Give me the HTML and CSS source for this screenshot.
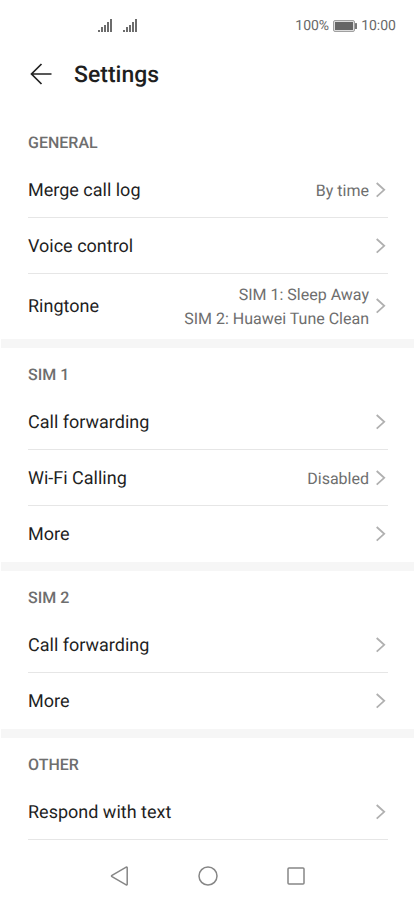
FILE: index.html
```html
<!DOCTYPE html>
<html lang="en">
<head>
    <meta charset="UTF-8">
    <meta name="viewport" content="width=device-width, initial-scale=1.0">
    <title>Settings</title>
    <link rel="stylesheet" href="styles.css">
</head>
<body>
    <!-- Shared icons -->
    <svg class="sprite" aria-hidden="true">
        <symbol id="chevron" viewBox="0 0 12 16">
            <path d="M0.700 1 L8.200 7.800 L0.700 14.600" fill="none" stroke="#b0b0b0" stroke-width="1.800"/>
        </symbol>
        <symbol id="signal" viewBox="0 0 15 14">
            <path d="M0 11h2v2H0zM3 8h2v5H3zM6 6h2v7H6zM9 3h2v10H9zM12 0h2v13h-2z" fill="#6c6c6c"/>
        </symbol>
    </svg>

    <div class="status-bar">
        <div class="signals">
            <svg class="signal"><use href="#signal"/></svg>
            <svg class="signal"><use href="#signal"/></svg>
        </div>
        <div class="status-right">
            <span>100%</span>
            <svg class="battery" viewBox="0 0 24 12">
                <rect x="0.500" y="0.500" width="21" height="11" rx="1.500" fill="#ddd" stroke="#a0a0a0"/>
                <rect x="2" y="2" width="18" height="8" fill="#666"/>
                <rect x="22" y="3" width="2" height="6" rx="0.500" fill="#777"/>
            </svg>
            <span>10:00</span>
        </div>
    </div>

    <header class="header">
        <button class="back" type="button" aria-label="Back">
            <svg viewBox="0 0 22 22">
                <path d="M21.500 11H1.500M11.500 1L1.500 11L11.500 21" fill="none" stroke="#222" stroke-width="1.700"/>
            </svg>
        </button>
        <h1>Settings</h1>
    </header>

    <main>
        <section class="group">
            <h2>GENERAL</h2>
            <a class="row" href="#">
                <span class="label">Merge call log</span>
                <span class="value">By time</span>
                <svg class="chevron"><use href="#chevron"/></svg>
            </a>
            <a class="row" href="#">
                <span class="label">Voice control</span>
                <svg class="chevron"><use href="#chevron"/></svg>
            </a>
            <a class="row" href="#">
                <span class="label">Ringtone</span>
                <span class="value">SIM 1: Sleep Away<br>SIM 2: Huawei Tune Clean</span>
                <svg class="chevron"><use href="#chevron"/></svg>
            </a>
        </section>

        <section class="group">
            <h2>SIM 1</h2>
            <a class="row" href="#">
                <span class="label">Call forwarding</span>
                <svg class="chevron"><use href="#chevron"/></svg>
            </a>
            <a class="row" href="#">
                <span class="label">Wi-Fi Calling</span>
                <span class="value">Disabled</span>
                <svg class="chevron"><use href="#chevron"/></svg>
            </a>
            <a class="row" href="#">
                <span class="label">More</span>
                <svg class="chevron"><use href="#chevron"/></svg>
            </a>
        </section>

        <section class="group">
            <h2>SIM 2</h2>
            <a class="row" href="#">
                <span class="label">Call forwarding</span>
                <svg class="chevron"><use href="#chevron"/></svg>
            </a>
            <a class="row" href="#">
                <span class="label">More</span>
                <svg class="chevron"><use href="#chevron"/></svg>
            </a>
        </section>

        <section class="group open">
            <h2>OTHER</h2>
            <a class="row" href="#">
                <span class="label">Respond with text</span>
                <svg class="chevron"><use href="#chevron"/></svg>
            </a>
        </section>
    </main>

    <nav class="nav-bar">
        <button type="button" aria-label="Back">
            <svg viewBox="0 0 20 20">
                <path d="M17.200 1.700V18.300Q17.200 19.300 16.200 18.800L2 10.700Q1 10 2 9.300L16.200 1.200Q17.200 0.700 17.200 1.700Z"/>
            </svg>
        </button>
        <button type="button" aria-label="Home">
            <svg viewBox="0 0 20 20"><circle cx="10" cy="10" r="9"/></svg>
        </button>
        <button type="button" aria-label="Recent apps">
            <svg viewBox="0 0 20 20"><rect x="2" y="2" width="16" height="16" rx="1"/></svg>
        </button>
    </nav>
</body>
</html>
```
FILE: styles.css
```css
* {
    box-sizing: border-box;
}

body {
    margin: 0;
    min-height: 100vh;
    display: flex;
    flex-direction: column;
    background-color: #fff;
    color: #1f1f1f;
    font-family: Roboto, sans-serif;
    text-rendering: geometricPrecision;
}

button {
    padding: 0;
    border: none;
    background: none;
    cursor: pointer;
}

svg {
    display: block;
}

.sprite {
    display: none;
}

/* Status bar */
.status-bar {
    display: flex;
    justify-content: space-between;
    align-items: center;
    height: 52px;
    padding: 0 19px 0 98px;
    font-size: 14px;
    color: #6a6a6a;
}

.signals {
    display: flex;
    gap: 10px;
}

.signal {
    width: 15px;
    height: 14px;
}

.status-right {
    display: flex;
    align-items: center;
    gap: 4px;
}

.battery {
    width: 24px;
    height: 12px;
}

/* Header */
.header {
    display: flex;
    align-items: center;
    gap: 22px;
    height: 44px;
    padding: 0 28px 0 30px;
    margin-bottom: 20px;
}

.back svg {
    width: 22px;
    height: 22px;
}

.header h1 {
    margin: 0;
    font-size: 23px;
    font-weight: 500;
}

/* Groups of settings */
.group {
    margin: 0 1px;
    padding: 0 26px 0 27px;
    border-bottom: 9px solid #f6f6f6;
}

.group.open {
    border-bottom: none;
}

.group h2 {
    margin: 0;
    padding: 17px 0 9px;
    font-size: 16px;
    line-height: 20px;
    font-weight: 500;
    color: #6e6e6e;
}

.row {
    display: flex;
    align-items: center;
    min-height: 56px;
    padding: 7px 0;
    border-bottom: 1px solid #e6e6e6;
    color: inherit;
    text-decoration: none;
}

.group:not(.open) .row:last-child {
    border-bottom-color: transparent;
}

.label,
.value {
    padding-top: 2px;
    line-height: 24px;
}

.label {
    flex: 1;
    font-size: 18px;
}

.value {
    font-size: 16px;
    text-align: right;
    color: #6e6e6e;
}

.chevron {
    flex: none;
    width: 12px;
    height: 16px;
    margin-left: 7px;
}

/* Navigation bar */
.nav-bar {
    display: flex;
    justify-content: center;
    gap: 68px;
    margin-top: auto;
    padding: 14px 0;
}

.nav-bar svg {
    width: 20px;
    height: 20px;
    fill: none;
    stroke: #868686;
    stroke-width: 1.5px;
}
```
